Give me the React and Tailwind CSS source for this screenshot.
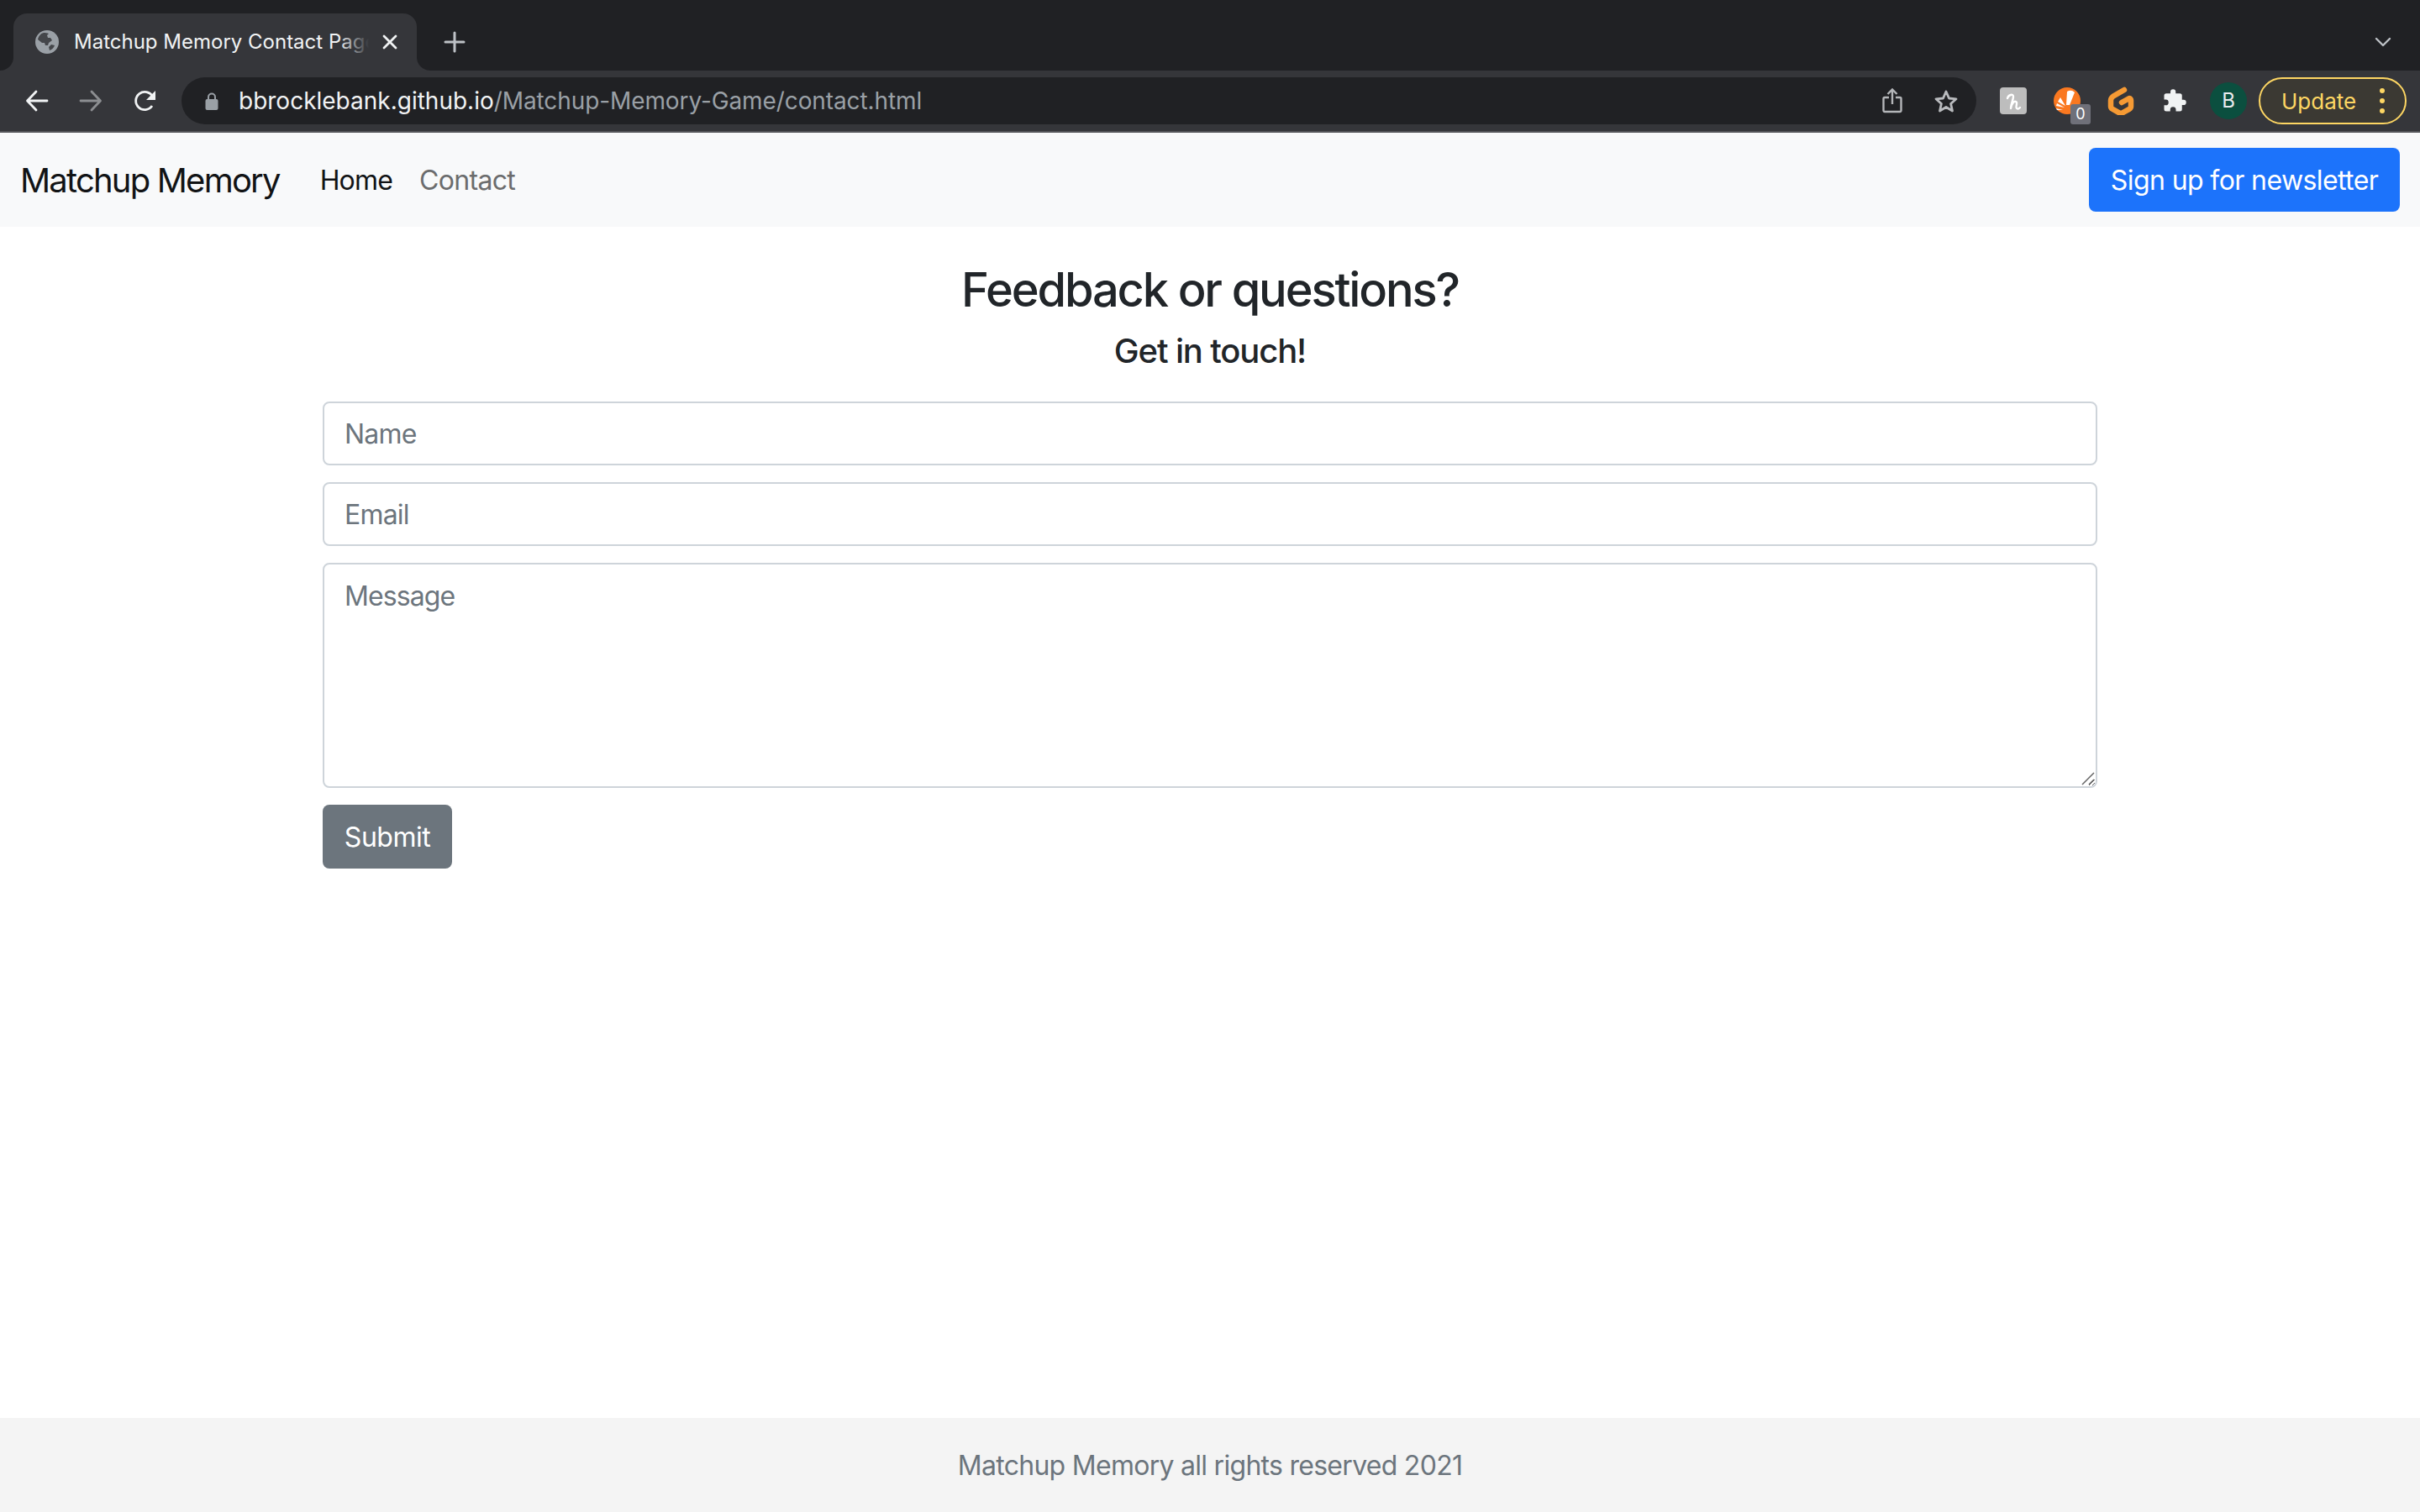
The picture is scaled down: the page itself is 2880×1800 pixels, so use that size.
const GlobeIcon = () => (
    <svg width="28" height="28" viewBox="0 0 28 28">
        <circle cx="14" cy="14" r="14" fill="#9aa0a6" />
        <path d="M10 3c-4 1-6 4-7 8l5 4 3 0 1 3 3 0 1-3 4-3-2-3-3 0-1-3 2-2c-2-1-4-1-6-1z" fill="#35363a" opacity="0.85" />
        <path d="M19 17l4 1c-1 3-3 5-6 6l-1-4z" fill="#35363a" opacity="0.85" />
    </svg>
)

const ArrowIcon = ({ flip, color }) => (
    <svg width="28" height="26" viewBox="0 0 28 26" fill="none" stroke={color} strokeWidth="2.8" strokeLinecap="round" strokeLinejoin="round" className={flip ? "-scale-x-100" : ""}>
        <path d="M26 13H3M13 2 2.5 13 13 24" />
    </svg>
)

const ReloadIcon = () => (
    <svg width="28" height="28" viewBox="0 0 28 28" fill="none" className="ml-[2px]">
        <path d="M22 20a10.6 10.6 0 1 1 .6-11" stroke="#f1f3f4" strokeWidth="2.8" />
        <path d="M26 2v11H15z" fill="#f1f3f4" />
    </svg>
)

const LockIcon = () => (
    <svg width="16" height="21" viewBox="0 0 16 21" fill="none">
        <path d="M4 9V5.500a4 4 0 0 1 8 0V9" stroke="#9aa0a6" strokeWidth="2" />
        <rect x="0.500" y="8" width="15" height="13" rx="2" fill="#9aa0a6" />
    </svg>
)

const ShareIcon = () => (
    <svg width="24" height="30" viewBox="0 0 24 30" fill="none" stroke="#b4b6b9" strokeWidth="2.400">
        <path d="M8 11H3a1.500 1.500 0 0 0-1.500 1.500v14A1.500 1.500 0 0 0 3 28h18a1.500 1.500 0 0 0 1.500-1.500v-14A1.500 1.500 0 0 0 21 11h-5" />
        <path d="M12 19V2M6.500 7 12 1.500 17.500 7" />
    </svg>
)

const StarIcon = () => (
    <svg width="30" height="28" viewBox="0 0 30 28" fill="none" stroke="#b9bbbe" strokeWidth="2.800" strokeLinejoin="round">
        <path d="M15 3l3.500 8 8.500.8-6.400 5.700 1.900 8.500L15 21.500 7.500 26l1.900-8.500L3 11.800l8.500-.8z" />
    </svg>
)

const HoneyIcon = () => (
    <svg width="32" height="32" viewBox="0 0 32 32" fill="none">
        <rect width="32" height="32" rx="4" fill="#bdbdbd" />
        <path d="M9 13c1-4 7-6 7-2 0 4-3 9-3 14 1-6 4-9 6-8 3 1-1 6 1 8 1 1 3 0 4-1" stroke="#fff" strokeWidth="2.400" strokeLinecap="round" strokeLinejoin="round" />
    </svg>
)

const SunIcon = () => (
    <svg width="32" height="32" viewBox="0 0 32 32">
        <circle cx="16" cy="16" r="16" fill="#fa7820" />
        <path d="M15 21 16 5q5-3 9 1L19 21z" fill="#fff" />
        <path d="M14 22 5 17l3-5z" fill="#fff" />
        <path d="M13 24 3 22l1-3z" fill="#fff" />
        <path d="M11 27H4l-1-2z" fill="#fff" />
    </svg>
)

const GitpodIcon = () => (
    <svg width="32" height="34" viewBox="0 0 32 34" fill="none">
        <path d="M20 4 7 11.500C5 13 4 14.500 4 16.500v7c0 1.500.8 2.600 2 3.300l8 4.500c1.300.7 2.700.7 4 0l8-4.500c1.200-.7 2-1.800 2-3.300v-7c0-1.500-.8-2.500-2-2.500l-9 5" stroke="#f59a34" strokeWidth="6.500" strokeLinecap="round" strokeLinejoin="round" />
    </svg>
)

const PuzzleIcon = () => (
    <svg width="30" height="30" viewBox="0 0 24 24" fill="#f1f3f4">
        <path d="M20.500 11H19V7a2 2 0 0 0-2-2h-4V3.500a2.500 2.500 0 0 0-5 0V5H4a2 2 0 0 0-2 2v3.800h1.500a2.700 2.700 0 0 1 0 5.400H2V20a2 2 0 0 0 2 2h3.800v-1.500a2.700 2.700 0 0 1 5.400 0V22H17a2 2 0 0 0 2-2v-4h1.500a2.500 2.500 0 0 0 0-5z" />
    </svg>
)

const ExtensionSlot = ({ children }) => (
    <div className="relative flex h-[56px] w-[64px] items-center justify-center">{children}</div>
)

const Field = ({ placeholder }) => (
    <input
        type="text"
        placeholder={placeholder}
        className="h-[76px] w-full rounded-[8px] border-2 border-[#ced4da] bg-white px-[24px] text-[32px] tracking-[-0.8px] text-[#212529] outline-none placeholder:text-[#6c757d]"
    />
)

const BrowserChrome = () => (
    <div className="shrink-0 bg-[#202124]">
        <div className="flex h-[84px] items-end">
            <div className="relative ml-[16px] flex h-[68px] w-[480px] items-center rounded-t-[16px] bg-[#35363a] pl-[26px]">
                <svg width="16" height="16" viewBox="0 0 16 16" className="absolute bottom-0 left-[-16px]"><path d="M16 0v16H0A16 16 0 0 0 16 0z" fill="#35363a" /></svg>
                <svg width="16" height="16" viewBox="0 0 16 16" className="absolute bottom-0 right-[-16px]"><path d="M0 0v16h16A16 16 0 0 1 0 0z" fill="#35363a" /></svg>
                <GlobeIcon />
                <div className="relative ml-[18px] w-[351px] overflow-hidden whitespace-nowrap text-[24px] text-[#f1f3f4]">
                    Matchup Memory Contact Page
                    <div className="absolute inset-y-0 right-0 w-[36px] bg-gradient-to-r from-transparent to-[#35363a]"></div>
                </div>
                <svg width="20" height="20" viewBox="0 0 20 20" className="ml-[15px]" stroke="#f1f3f4" strokeWidth="2.800" strokeLinecap="round"><path d="M3 3l14 14M17 3 3 17" /></svg>
            </div>
            <div className="ml-[32px] flex h-[68px] items-center">
                <svg width="26" height="26" viewBox="0 0 26 26" stroke="#bdc1c6" strokeWidth="3" strokeLinecap="round"><path d="M13 2v22M2 13h22" /></svg>
            </div>
            <div className="ml-auto mr-[34px] flex h-[68px] items-center">
                <svg width="20" height="12" viewBox="0 0 20 12" fill="none" stroke="#bdc1c6" strokeWidth="2.400" strokeLinecap="round" strokeLinejoin="round"><path d="M2 2l8 8 8-8" /></svg>
            </div>
        </div>
        <div className="flex h-[72px] items-center bg-[#35363a] pl-[12px]">
            <div className="flex h-[56px] w-[64px] items-center justify-center"><ArrowIcon color="#f1f3f4" /></div>
            <div className="flex h-[56px] w-[64px] items-center justify-center"><ArrowIcon flip color="#8c8e91" /></div>
            <div className="flex h-[56px] w-[64px] items-center justify-center"><ReloadIcon /></div>
            <div className="ml-[12px] flex h-[56px] flex-1 items-center rounded-full bg-[#202124] pl-[28px] pr-[4px]">
                <LockIcon />
                <div className="ml-[24px] flex-1 whitespace-nowrap text-[28px] text-[#f1f3f4]">
                    bbrocklebank.github.io<span className="tracking-[-0.1px] text-[#9aa0a6]">/Matchup-Memory-Game/contact.html</span>
                </div>
                <div className="flex h-[56px] w-[64px] items-center justify-center"><ShareIcon /></div>
                <div className="flex h-[56px] w-[64px] items-center justify-center"><StarIcon /></div>
            </div>
            <div className="ml-[12px] flex items-center">
                <ExtensionSlot><HoneyIcon /></ExtensionSlot>
                <ExtensionSlot>
                    <SunIcon />
                    <div className="absolute left-[36px] top-[32px] flex h-[24px] w-[24px] items-center justify-center rounded-[3px] bg-[#6f7079] text-[18px] leading-none text-white">0</div>
                </ExtensionSlot>
                <ExtensionSlot><GitpodIcon /></ExtensionSlot>
                <ExtensionSlot><PuzzleIcon /></ExtensionSlot>
                <ExtensionSlot>
                    <div className="flex h-[44px] w-[44px] items-center justify-center rounded-full bg-[#0b4f3f] text-[24px] text-[#e8eaed]">B</div>
                </ExtensionSlot>
            </div>
            <div className="ml-[4px] mr-[16px] flex h-[56px] w-[176px] items-center rounded-full border-2 border-[#fdd663] bg-[#3b3933] pl-[25px]">
                <span className="text-[26px] text-[#fdd663]">Update</span>
                <div className="ml-[28px] flex flex-col gap-[6px]">
                    <span className="h-[6px] w-[6px] rounded-full bg-[#fdd663]"></span>
                    <span className="h-[6px] w-[6px] rounded-full bg-[#fdd663]"></span>
                    <span className="h-[6px] w-[6px] rounded-full bg-[#fdd663]"></span>
                </div>
            </div>
        </div>
        <div className="h-[2px] bg-[#55565a]"></div>
    </div>
)

const App = () => {
    return (
        <div className="flex h-screen flex-col overflow-hidden bg-white font-['Inter','Liberation_Sans',sans-serif]">
            <BrowserChrome />

            <nav className="flex h-[112px] shrink-0 items-center bg-[#f8f9fa] pl-[24px] pr-[24px]">
                <a className="pt-[2px] text-[40px] tracking-[-1.8px] text-[#111315]">Matchup Memory</a>
                <a className="ml-[48px] pt-[2px] text-[32px] tracking-[-0.8px] text-[#111315]">Home</a>
                <a className="ml-[32px] pt-[2px] text-[32px] tracking-[-0.7px] text-[#6b6c6d]">Contact</a>
                <button className="ml-auto flex h-[76px] w-[370px] items-center justify-center rounded-[8px] bg-[#1c73fb] pt-[2px] text-[32px] tracking-[-0.6px] text-white">Sign up for newsletter</button>
            </nav>

            <main className="flex-1">
                <div className="mx-auto w-[2112px]">
                    <h2 className="mt-[41px] text-center text-[56px] font-medium leading-[68px] tracking-[-2.15px] text-[#212529]">Feedback or questions?</h2>
                    <h4 className="mt-[15px] text-center text-[40px] font-medium leading-[48px] tracking-[-1.15px] text-[#212529]">Get in touch!</h4>
                    <form className="mt-[36px] flex flex-col gap-[20px]">
                        <Field placeholder="Name" />
                        <Field placeholder="Email" />
                        <div className="relative">
                            <textarea
                                placeholder="Message"
                                className="block h-[268px] w-full rounded-[8px] border-2 border-[#ced4da] bg-white px-[24px] py-[14px] text-[32px] tracking-[-0.9px] text-[#212529] outline-none placeholder:text-[#6c757d]"
                            ></textarea>
                            <svg width="16" height="16" viewBox="0 0 16 16" stroke="#666" strokeWidth="1.500" className="pointer-events-none absolute bottom-[3px] right-[3px]"><path d="M1 15 15 1M9 15l6-6" /></svg>
                        </div>
                        <button type="button" className="h-[76px] w-[154px] rounded-[8px] bg-[#6c757d] pt-[1px] text-[32px] tracking-[-0.5px] text-white">Submit</button>
                    </form>
                </div>
            </main>

            <footer className="flex h-[112px] shrink-0 items-center justify-center bg-[#f4f4f4] pt-[2px] text-[32px] tracking-[-0.72px] text-[#6c757d]">
                Matchup Memory all rights reserved 2021
            </footer>
        </div>
    )
}

export default App
